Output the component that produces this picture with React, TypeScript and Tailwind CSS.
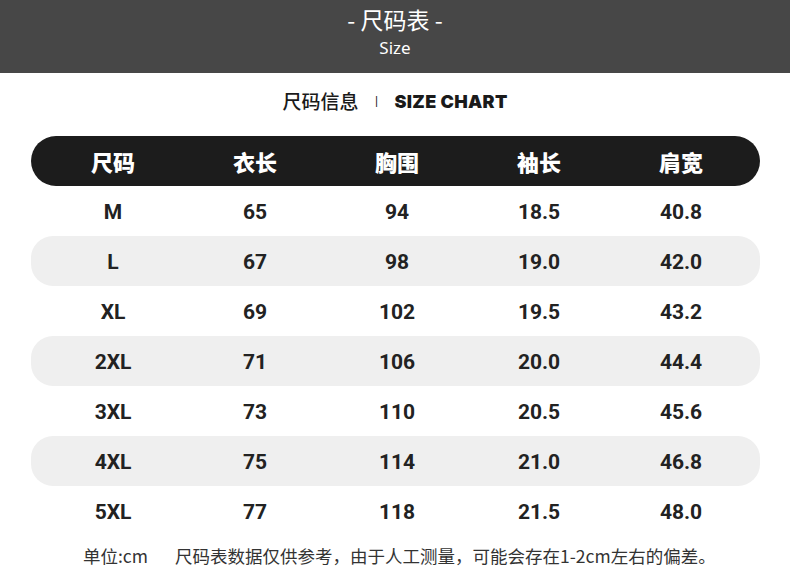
const cjk = { fontFamily: '"Noto Sans CJK SC", "Noto Sans", sans-serif' };
const num = { fontFamily: 'Roboto, "Noto Sans CJK SC", sans-serif' };

const headers = ['尺码', '衣长', '胸围', '袖长', '肩宽'];

const rows = [
  ['M', '65', '94', '18.5', '40.8'],
  ['L', '67', '98', '19.0', '42.0'],
  ['XL', '69', '102', '19.5', '43.2'],
  ['2XL', '71', '106', '20.0', '44.4'],
  ['3XL', '73', '110', '20.5', '45.6'],
  ['4XL', '75', '114', '21.0', '46.8'],
  ['5XL', '77', '118', '21.5', '48.0'],
];

export default function App() {
  return (
    <div className="w-[790px] h-[578px] bg-white overflow-hidden" style={cjk}>
      <div className="h-[73px] bg-[#474747] flex flex-col items-center pt-[3px] text-white">
        <div className="text-[23px] leading-[32px]">- 尺码表 -</div>
        <div className="text-[17px] leading-[26px]" style={{ fontFamily: '"Noto Sans", sans-serif' }}>Size</div>
      </div>

      <div className="h-[56px] flex items-center justify-center gap-[16px] pt-[1px] text-[#1a1a1a]">
        <span className="text-[19px] font-medium">尺码信息</span>
        <span className="text-[15px] font-light">I</span>
        <span className="text-[18px] font-black tracking-[0.3px]" style={{ fontFamily: 'Inter, sans-serif' }}>
          SIZE CHART
        </span>
      </div>

      <div className="pl-[31px] pr-[30px] mt-[7px]">
        <div className="h-[50px] bg-[#1c1c1c] rounded-full grid grid-cols-[repeat(5,142px)] pl-[11px] items-center text-white text-[22px] font-black">
          {headers.map((h) => (
            <div key={h} className="text-center">{h}</div>
          ))}
        </div>

        {rows.map((r, i) => (
          <div
            key={r[0]}
            className={`h-[50px] rounded-[22px] grid grid-cols-[repeat(5,142px)] pl-[11px] pt-[4px] items-center text-[#222] text-[21px] font-bold ${
              i % 2 === 1 ? 'bg-[#efefef]' : ''
            }`}
            style={num}
          >
            {r.map((c, j) => (
              <div key={j} className="text-center">{c}</div>
            ))}
          </div>
        ))}
      </div>

      <div className="flex items-center h-[40px] pl-[83px] text-[17.5px] text-[#333]">
        <span className="w-[92px]">单位:cm</span>
        <span>尺码表数据仅供参考，由于人工测量，可能会存在1-2cm左右的偏差。</span>
      </div>
    </div>
  );
}
